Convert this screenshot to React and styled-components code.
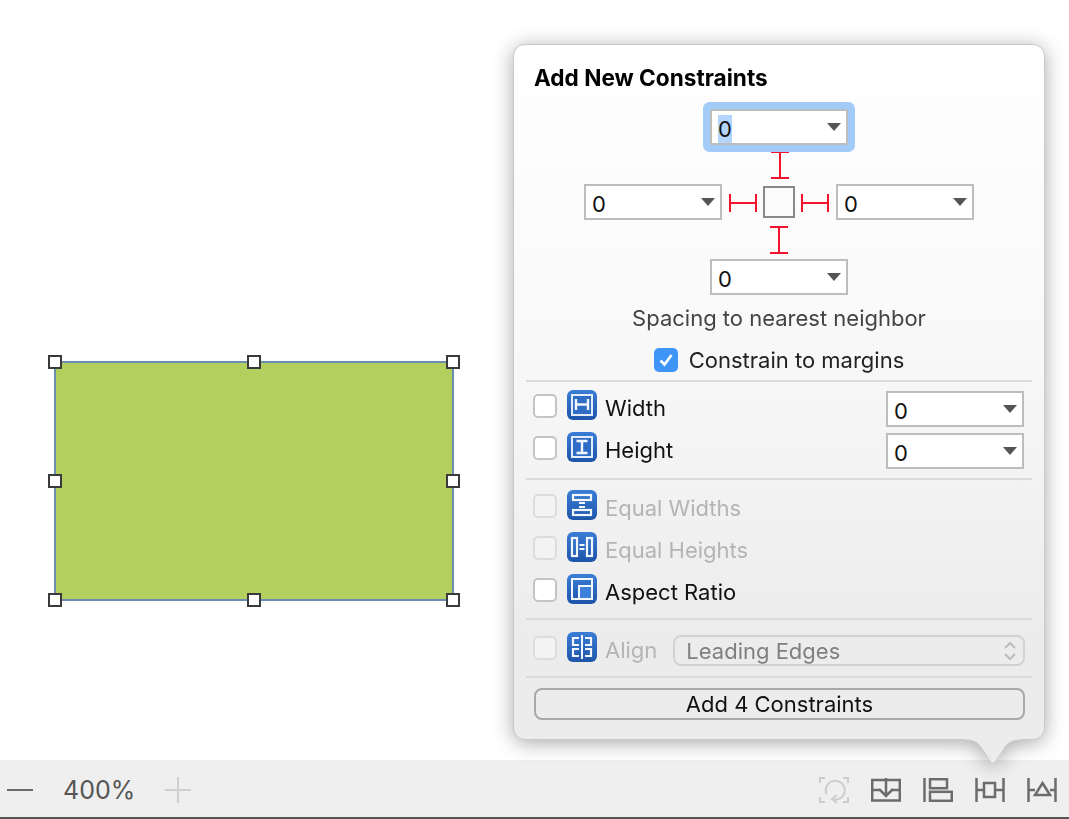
import React from 'react';
import styled, { createGlobalStyle } from 'styled-components';

const GlobalStyle = createGlobalStyle`
  html, body { margin: 0; padding: 0; background: #fff; }
  body { font-family: Inter, "Liberation Sans", sans-serif; }
`;

const Page = styled.div`
  position: relative;
  width: 1069px;
  height: 819px;
  overflow: hidden;
  display: flex;
  flex-direction: column;
`;

const Canvas = styled.div`
  position: relative;
  height: 760px;
  background: #fff;
`;

// the selected view on the canvas
const View = styled.div`
  position: absolute;
  left: 55px;
  top: 362px;
  width: 398px;
  height: 238px;
  background: #b3cf5d;
  box-shadow: 0 0 0 1px #6b8db0, inset 0 0 0 1px #6b8db0;
`;

const Handle = styled.span`
  position: absolute;
  left: ${p => p.$x}%;
  top: ${p => p.$y}%;
  width: 14px;
  height: 14px;
  box-sizing: border-box;
  transform: translate(-50%, -50%);
  background: #fff;
  border: 2px solid #3a3a3a;
`;

const Popover = styled.div`
  position: absolute;
  left: 513px;
  top: 44px;
  width: 532px;
  z-index: 2;
  filter: drop-shadow(0 3px 10px rgba(0, 0, 0, 0.34));
`;

const Panel = styled.div`
  position: relative;
  height: 696px;
  box-sizing: border-box;
  display: flex;
  flex-direction: column;
  border-radius: 12px;
  border: 1px solid #c9c9c9;
  background: linear-gradient(180deg, #ffffff 0%, #f9f9f9 40%, #f3f3f3 62%, #ececec 85%, #ececec 100%);
`;

const Beak = styled.svg`
  position: absolute;
  left: 452px;
  top: 695px;
  display: block;
`;

const Title = styled.div`
  margin: 21px 0 19px 20px;
  font-size: 22.6px;
  line-height: 24px;
  font-weight: 700;
  color: #000;
`;

const Cross = styled.div`
  align-self: center;
  display: grid;
  grid-template-columns: 138px 114px 138px;
  grid-template-rows: 36px 39px 36px 39px 36px;
  justify-items: center;
  align-items: center;
`;

const Field = styled.div`
  position: relative;
  width: 138px;
  height: 36px;
  box-sizing: border-box;
  display: flex;
  align-items: center;
  justify-content: space-between;
  padding: 0 5px 0 6px;
  background: #fff;
  border: 2px solid #bdbdbd;
  font-size: 22px;
  color: #111;
  grid-column: ${p => p.$col || 'auto'};
  grid-row: ${p => p.$row || 'auto'};
  ${p => p.$focus && 'box-shadow: 0 0 0 7px #a2cbf8; border-radius: 2px; z-index: 1;'}
  ${p => p.$offset && 'margin-top: 8px;'}
`;

const Value = styled.span`
  margin-top: 3px;
  background: ${p => (p.$selected ? '#b3d4fb' : 'transparent')};
  line-height: 28px;
`;

const Caret = styled.span`
  width: 0;
  height: 0;
  border-left: 7px solid transparent;
  border-right: 7px solid transparent;
  border-top: 8px solid #555;
`;

const CenterRow = styled.div`
  grid-column: 2;
  grid-row: 3;
  display: flex;
  align-items: center;
  gap: 6px;
`;

const CenterSquare = styled.div`
  width: 32px;
  height: 32px;
  box-sizing: border-box;
  border: 2px solid #8a8a8a;
  background: #fbfbfb;
`;

const StrutSlot = styled.div`
  grid-column: 2;
  grid-row: ${p => p.$row};
  margin-left: ${p => p.$nudge || 0}px;
  display: flex;
  align-items: center;
  justify-content: center;
  line-height: 0;
`;

const StrutSide = styled.div`
  margin-top: 2px;
  line-height: 0;
`;

const Caption = styled.div`
  margin-top: 10px;
  text-align: center;
  font-size: 22px;
  line-height: 26px;
  color: #444;
`;

const MarginRow = styled.div`
  margin-top: 16px;
  height: 26px;
  display: flex;
  align-items: center;
  justify-content: center;
  gap: 11px;
  font-size: 22px;
  color: #222;
`;

const Divider = styled.div`
  height: 2px;
  margin: ${p => p.$top || 0}px 12px ${p => p.$bottom || 0}px;
  background: #dadada;
`;

const Row = styled.div`
  height: 42px;
  display: flex;
  align-items: center;
  padding: 0 20px 0 19px;
`;

const Check = styled.span`
  flex: none;
  width: 24px;
  height: 24px;
  box-sizing: border-box;
  margin-top: 2px;
  border-radius: 5px;
  border: 2px solid ${p => (p.$disabled ? '#dcdcdc' : '#c4c4c4')};
  background: ${p => (p.$disabled ? '#f3f3f3' : '#fff')};
`;

const CheckedBox = styled.span`
  flex: none;
  width: 24px;
  height: 24px;
  display: flex;
  align-items: center;
  justify-content: center;
  border-radius: 5px;
  background: #3f95f7;
`;

const Glyph = styled.svg`
  flex: none;
  display: block;
  margin-left: 10px;
`;

const Label = styled.span`
  margin: 5px 0 0 8px;
  font-size: 22px;
  line-height: 26px;
  color: ${p => (p.$disabled ? '#b4b4b4' : '#111')};
`;

const RightField = styled(Field)`
  margin-left: auto;
`;

const AlignSelect = styled.div`
  flex: 1;
  height: 31px;
  box-sizing: border-box;
  margin: 7px -1px 0 16px;
  padding: 0 6px 0 11px;
  display: flex;
  align-items: center;
  justify-content: space-between;
  border: 2px solid #d2d2d2;
  border-radius: 8px;
  font-size: 22px;
  color: #808080;
`;

const AddButton = styled.div`
  margin: 10px 19px 0 20px;
  height: 32px;
  box-sizing: border-box;
  display: flex;
  align-items: center;
  justify-content: center;
  border: 2px solid #a8a8a8;
  border-radius: 8px;
  font-size: 22px;
  color: #111;
`;

const Toolbar = styled.div`
  height: 59px;
  box-sizing: border-box;
  display: flex;
  align-items: center;
  background: #efefef;
  border-bottom: 2px solid #555;
  padding: 2px 12px 0 7px;
`;

const ZoomText = styled.span`
  margin: 0 30px 0 30px;
  font-size: 25px;
  color: #555;
`;

const ToolIcons = styled.div`
  margin-left: auto;
  display: flex;
  align-items: center;
  gap: 22px;
`;

const ToolIcon = styled.svg`
  display: block;
`;

const handles = [
  [0, 0], [50, 0], [100, 0],
  [0, 50], [100, 50],
  [0, 100], [50, 100], [100, 100],
];

function Combo({ selected, ...rest }) {
  return (
    <Field {...rest}>
      <Value $selected={selected}>0</Value>
      <Caret />
    </Field>
  );
}

const VStrut = () => (
  <svg width="18" height="28" viewBox="0 0 18 28">
    <path d="M0 1h18M0 27h18M9 1v26" stroke="#f5122c" strokeWidth="2" fill="none" />
  </svg>
);

const HStrut = () => (
  <StrutSide>
    <svg width="28" height="18" viewBox="0 0 28 18">
      <path d="M1 0v18M27 0v18M1 9h26" stroke="#f5122c" strokeWidth="2" fill="none" />
    </svg>
  </StrutSide>
);

// blue rounded badge shared by the constraint glyphs
const Badge = ({ children }) => (
  <Glyph width="30" height="30" viewBox="0 0 30 30">
    <rect width="30" height="30" rx="6" fill="url(#badgeBlue)" />
    {children}
  </Glyph>
);

const WHITE = '#f2f6fd';

const glyphs = {
  width: (
    <Badge>
      <rect x="5" y="5" width="20" height="20" fill="#2f6cc6" stroke="#e2ecfa" strokeWidth="2" />
      <path d="M9 9v11M21 9v11M9 14.5h12" stroke={WHITE} strokeWidth="2.4" fill="none" />
    </Badge>
  ),
  height: (
    <Badge>
      <rect x="5" y="5" width="20" height="20" fill="#2f6cc6" stroke="#e2ecfa" strokeWidth="2" />
      <path d="M9.5 9h11M9.5 21h11M15 9v12" stroke={WHITE} strokeWidth="2.4" fill="none" />
    </Badge>
  ),
  equalWidths: (
    <Badge>
      <rect x="6" y="5" width="18" height="5" fill="none" stroke={WHITE} strokeWidth="2.2" />
      <rect x="6" y="20" width="18" height="5" fill="none" stroke={WHITE} strokeWidth="2.2" />
      <path d="M12 13h6M12 17h6" stroke={WHITE} strokeWidth="2" />
    </Badge>
  ),
  equalHeights: (
    <Badge>
      <rect x="5" y="6" width="5" height="18" fill="none" stroke={WHITE} strokeWidth="2.2" />
      <rect x="20" y="6" width="5" height="18" fill="none" stroke={WHITE} strokeWidth="2.2" />
      <path d="M12.5 13h5M12.5 17h5" stroke={WHITE} strokeWidth="2" />
    </Badge>
  ),
  aspect: (
    <Badge>
      <rect x="5" y="5" width="20" height="20" fill="none" stroke={WHITE} strokeWidth="2" />
      <path d="M12 25V12h13" fill="none" stroke={WHITE} strokeWidth="2" />
      <rect x="13" y="13" width="11" height="11" fill="#3d7fd8" />
    </Badge>
  ),
  align: (
    <Badge>
      <path d="M15 3v24" stroke={WHITE} strokeWidth="2" />
      <path d="M12 6H6v7h6M12 17H6v7h6M18 6h6v7h-6M18 17h6v7h-6" fill="none" stroke={WHITE} strokeWidth="2.2" />
    </Badge>
  ),
};

const GRAY = '#6c6c6c';

function App() {
  return (
    <Page>
      <GlobalStyle />
      <svg width="0" height="0" style={{ position: 'absolute' }}>
        <defs>
          <linearGradient id="badgeBlue" x1="0" y1="0" x2="0" y2="1">
            <stop offset="0" stopColor="#3b7dd6" />
            <stop offset="1" stopColor="#1e55a9" />
          </linearGradient>
        </defs>
      </svg>

      <Canvas>
        <View>
          {handles.map(([x, y]) => <Handle key={`${x}-${y}`} $x={x} $y={y} />)}
        </View>
      </Canvas>

      <Popover>
        <Panel>
          <Title>Add New Constraints</Title>

          <Cross>
            <Combo $col={2} $row={1} $focus selected />
            <StrutSlot $row={2} $nudge={2}><VStrut /></StrutSlot>
            <Combo $col={1} $row={3} />
            <CenterRow>
              <HStrut />
              <CenterSquare />
              <HStrut />
            </CenterRow>
            <Combo $col={3} $row={3} />
            <StrutSlot $row={4}><VStrut /></StrutSlot>
            <Combo $col={2} $row={5} />
          </Cross>

          <Caption>Spacing to nearest neighbor</Caption>

          <MarginRow>
            <CheckedBox>
              <svg width="16" height="14" viewBox="0 0 16 14">
                <path d="M2.5 7.5l4 4 7-9.5" stroke="#fff" strokeWidth="2.6" fill="none" />
              </svg>
            </CheckedBox>
            Constrain to margins
          </MarginRow>

          <Divider $top={7} $bottom={2} />

          <Row>
            <Check />
            {glyphs.width}
            <Label>Width</Label>
            <RightField $offset>
              <Value>0</Value>
              <Caret />
            </RightField>
          </Row>
          <Row>
            <Check />
            {glyphs.height}
            <Label>Height</Label>
            <RightField $offset>
              <Value>0</Value>
              <Caret />
            </RightField>
          </Row>

          <Divider $top={10} $bottom={4} />

          <Row>
            <Check $disabled />
            {glyphs.equalWidths}
            <Label $disabled>Equal Widths</Label>
          </Row>
          <Row>
            <Check $disabled />
            {glyphs.equalHeights}
            <Label $disabled>Equal Heights</Label>
          </Row>
          <Row>
            <Check />
            {glyphs.aspect}
            <Label>Aspect Ratio</Label>
          </Row>

          <Divider $top={8} $bottom={6} />

          <Row>
            <Check $disabled />
            {glyphs.align}
            <Label $disabled>Align</Label>
            <AlignSelect>
              Leading Edges
              <svg width="14" height="20" viewBox="0 0 14 20">
                <path d="M2 7l5-5 5 5M2 13l5 5 5-5" stroke="#bcbcbc" strokeWidth="2" fill="none" />
              </svg>
            </AlignSelect>
          </Row>

          <Divider $top={8} />

          <AddButton>Add 4 Constraints</AddButton>
        </Panel>
        <Beak width="56" height="27" viewBox="0 0 56 27">
          <path d="M0 1C8 1 12 3 16 8L25.5 23Q28 26 30.5 23L40 8C44 3 48 1 56 1V0H0Z" fill="#ececec" />
          <path d="M0 1C8 1 12 3 16 8L25.5 23Q28 26 30.5 23L40 8C44 3 48 1 56 1" fill="none" stroke="#c9c9c9" strokeWidth="1" />
        </Beak>
      </Popover>

      <Toolbar>
        <svg width="26" height="4" viewBox="0 0 26 4">
          <rect y="1" width="26" height="2" fill="#6a6a6a" />
        </svg>
        <ZoomText>400%</ZoomText>
        <svg width="26" height="26" viewBox="0 0 26 26">
          <path d="M0 13h26M13 0v26" stroke="#cfcfcf" strokeWidth="2" />
        </svg>
        <ToolIcons>
          <ToolIcon width="30" height="28" viewBox="0 0 30 28" fill="none" stroke="#cdcdcd" strokeWidth="2">
            <path d="M6 2H1v5M24 2h5v5M6 26H1v-5M24 26h5v-5" />
            <path d="M7.5 18A9.5 9.5 0 1 1 14 23.5M18 19l-5 4 5 4" />
          </ToolIcon>
          <ToolIcon width="30" height="24" viewBox="0 0 30 24" fill="none" stroke={GRAY} strokeWidth="2.5">
            <path d="M1.2 2h27.6v20.5H1.2zM1 12h8M21 12h8M15 0v18M8 11l7 7 7-7" />
          </ToolIcon>
          <ToolIcon width="30" height="24" viewBox="0 0 30 24" fill="none" stroke={GRAY} strokeWidth="2.5">
            <path d="M1.5 0v24" />
            <rect x="7" y="1.2" width="17" height="9" />
            <rect x="7" y="13.8" width="21.8" height="9" />
          </ToolIcon>
          <ToolIcon width="30" height="24" viewBox="0 0 30 24" fill="none" stroke={GRAY} strokeWidth="2.5">
            <path d="M1.5 0v24M28.5 0v24M1 12h8M20 12h9" />
            <rect x="9" y="5" width="11" height="14" />
          </ToolIcon>
          <ToolIcon width="30" height="24" viewBox="0 0 30 24" fill="none" stroke={GRAY} strokeWidth="2.5">
            <path d="M1.5 0v24M28.5 0v24M1 12h7M23 12h6" />
            <path d="M15.5 5L23 17H8Z" />
          </ToolIcon>
        </ToolIcons>
      </Toolbar>
    </Page>
  );
}

export default App;
